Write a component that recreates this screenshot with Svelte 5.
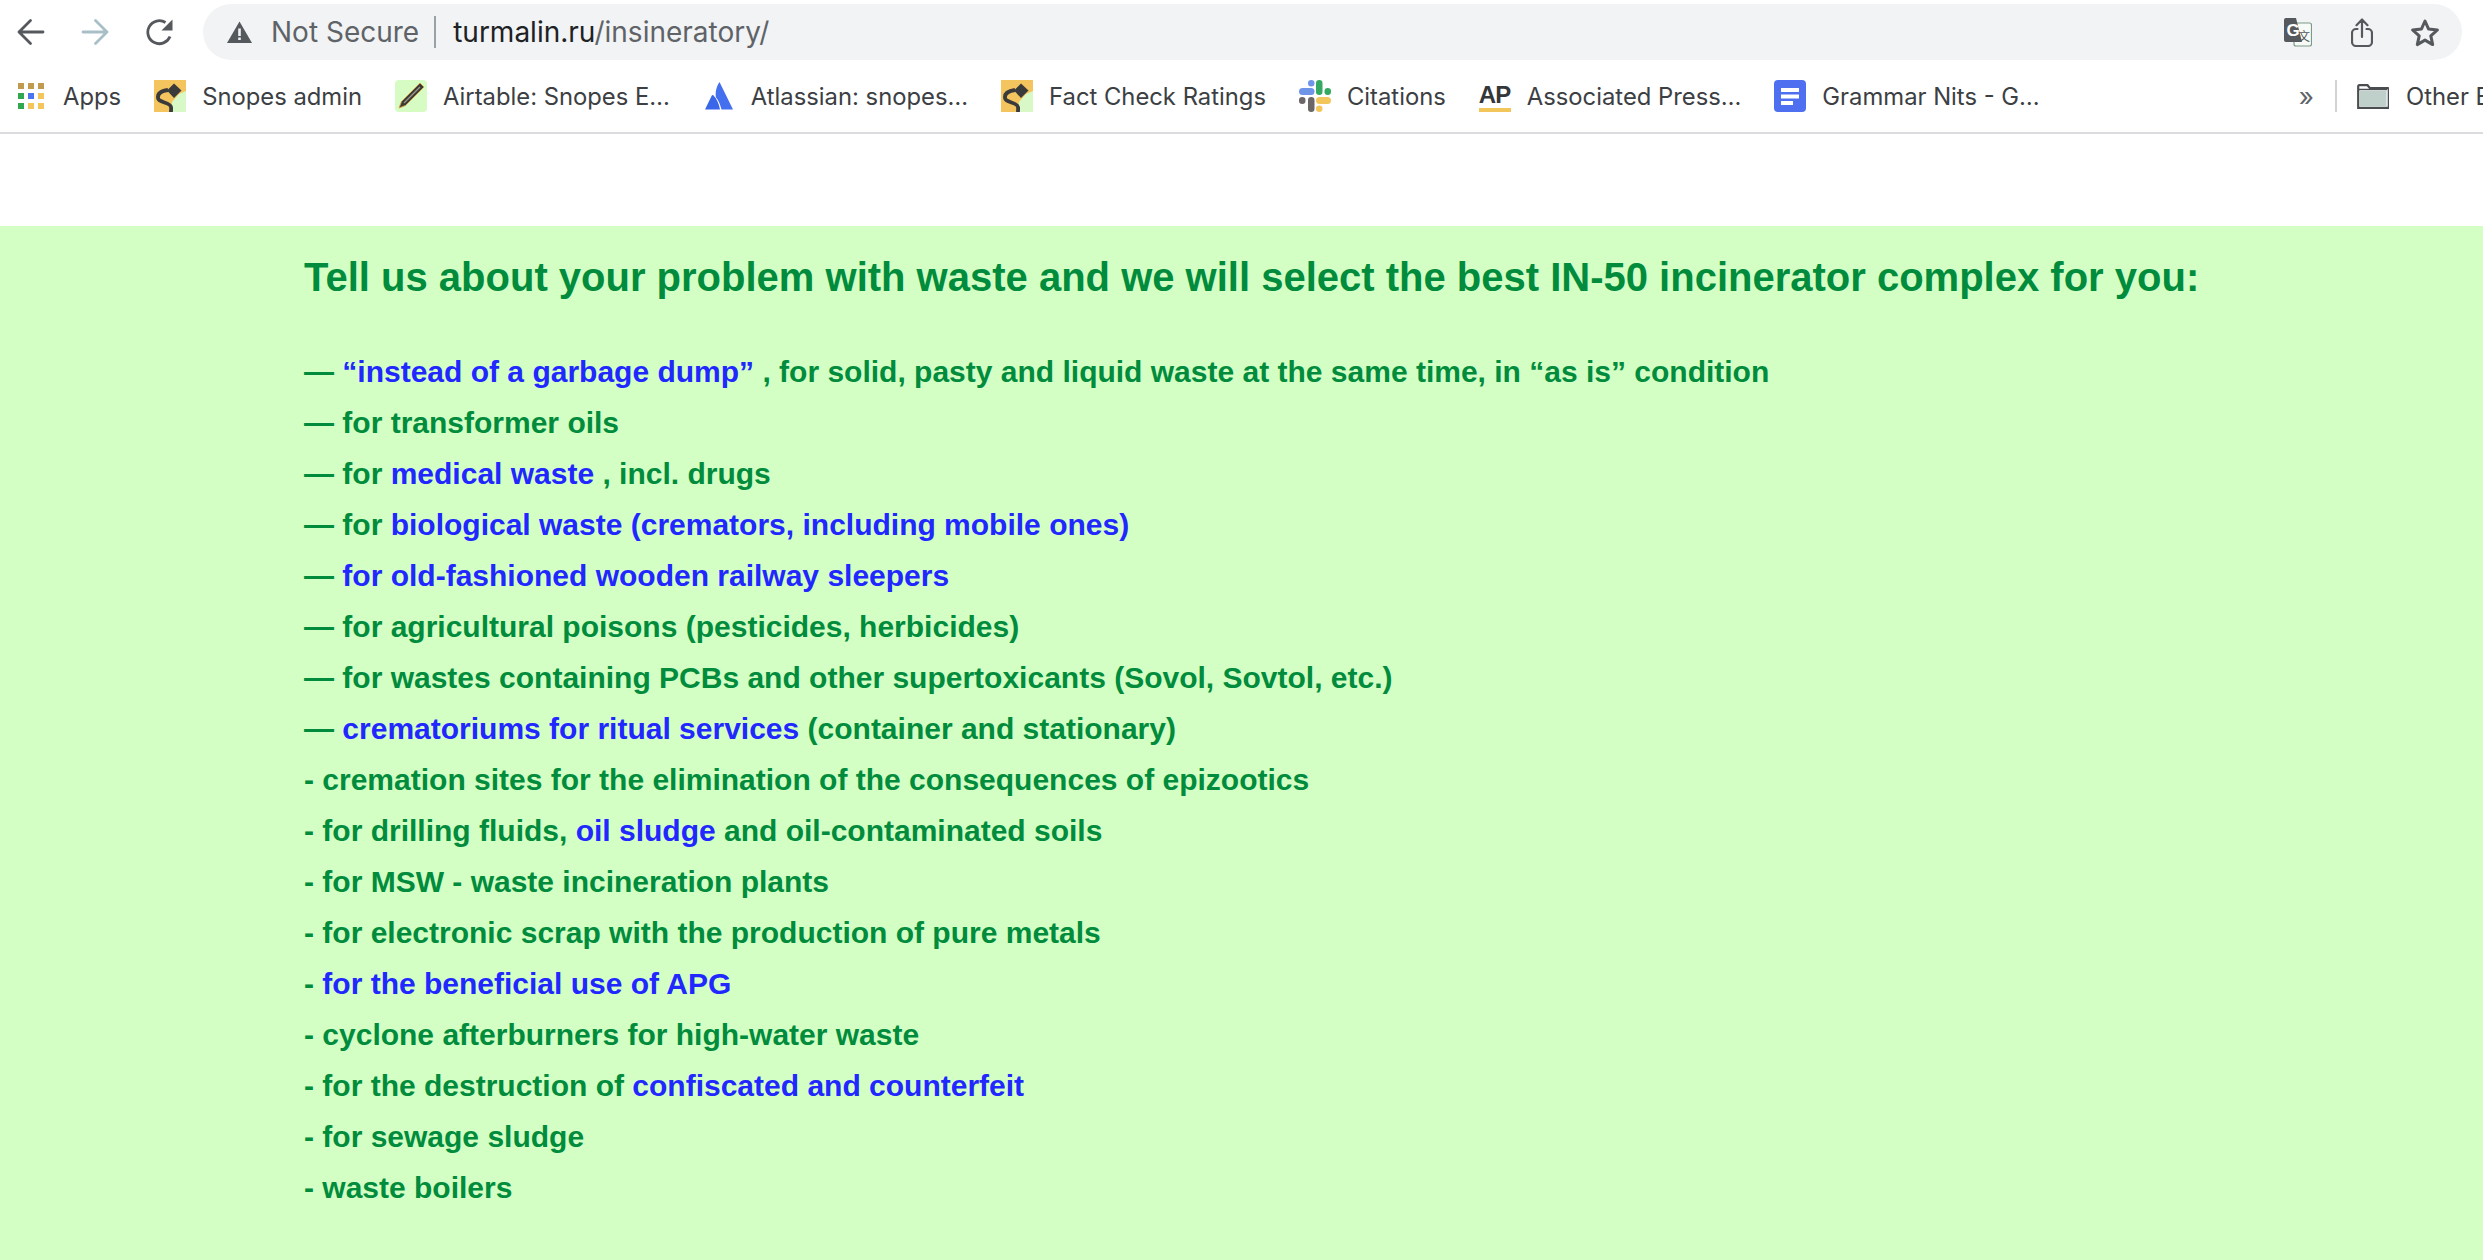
<script>
  const bookmarks = [
    { icon: "snopes", label: "Snopes admin" },
    { icon: "airtable", label: "Airtable: Snopes E…" },
    { icon: "atlassian", label: "Atlassian: snopes…" },
    { icon: "snopes", label: "Fact Check Ratings" },
    { icon: "slack", label: "Citations" },
    { icon: "ap", label: "Associated Press…" },
    { icon: "docs", label: "Grammar Nits - G…" },
  ];

  // each line is a list of runs, link = blue
  const lines = [
    [["— ", 0], ["“instead of a garbage dump”", 1], [" , for solid, pasty and liquid waste at the same time, in “as is” condition", 0]],
    [["— for transformer oils", 0]],
    [["— for ", 0], ["medical waste", 1], [" , incl. drugs", 0]],
    [["— for ", 0], ["biological waste (cremators, including mobile ones)", 1]],
    [["— ", 0], ["for old-fashioned wooden railway sleepers", 1]],
    [["— for agricultural poisons (pesticides, herbicides)", 0]],
    [["— for wastes containing PCBs and other supertoxicants (Sovol, Sovtol, etc.)", 0]],
    [["— ", 0], ["crematoriums for ritual services", 1], [" (container and stationary)", 0]],
    [["- cremation sites for the elimination of the consequences of epizootics", 0]],
    [["- for drilling fluids, ", 0], ["oil sludge", 1], [" and oil-contaminated soils", 0]],
    [["- for MSW - waste incineration plants", 0]],
    [["- for electronic scrap with the production of pure metals", 0]],
    [["- ", 0], ["for the beneficial use of APG", 1]],
    [["- cyclone afterburners for high-water waste", 0]],
    [["- for the destruction of ", 0], ["confiscated and counterfeit", 1]],
    [["- for sewage sludge", 0]],
    [["- waste boilers", 0]],
  ];
</script>

<header class="chrome">
  <div class="toolbar">
    <svg class="nav" viewBox="0 0 28 28" fill="none" stroke="#55585c" stroke-width="2.800" stroke-linecap="round" stroke-linejoin="round">
      <path d="M26 14H2M13.500 2.500 2 14l11.500 11.500" />
    </svg>
    <svg class="nav fwd" viewBox="0 0 28 28" fill="none" stroke="#a9bfc8" stroke-width="2.800" stroke-linecap="round" stroke-linejoin="round">
      <path d="M2 14h24M14.500 2.500 26 14 14.500 25.500" />
    </svg>
    <svg class="nav reload" viewBox="0 0 28 28" fill="none" stroke="#55585c" stroke-width="2.800">
      <path d="M25 18.500A11.500 11.500 0 1 1 20.500 4.500" />
      <path d="M27.500 1.500v11H16.500z" fill="#55585c" stroke="none" />
    </svg>
    <div class="omnibox">
      <svg class="warn" viewBox="0 0 25 22">
        <path d="M12.500 .5 25 22H0z" fill="#55585c" />
        <path d="M11.200 7.500h2.600v7.500h-2.600zM11.200 16.500h2.600v2.600h-2.600z" fill="#f1f3f4" />
      </svg>
      <span class="secure">Not Secure</span>
      <span class="sep"></span>
      <span class="url"><b>turmalin.ru</b>/insineratory/</span>
      <span class="spring"></span>
      <svg class="translate" viewBox="0 0 28 29">
        <rect x="10" y="5" width="17.500" height="23" rx="2" fill="#f7fbf8" stroke="#7d9a88" stroke-width="1.200" />
        <path d="M2 0h10l6 24H2a2 2 0 0 1-2-2V2a2 2 0 0 1 2-2z" fill="#55585c" />
        <text x="2.500" y="18" class="t-g">G</text>
        <text x="14" y="23" class="t-zh">文</text>
      </svg>
      <svg class="share" viewBox="0 0 22 29" fill="none" stroke="#55585c" stroke-width="2.200" stroke-linecap="round" stroke-linejoin="round">
        <path d="M11 19V2M5.500 7.200 11 1.500l5.500 5.700M6.500 11H5a4 4 0 0 0-4 4v9a4 4 0 0 0 4 4h12a4 4 0 0 0 4-4v-9a4 4 0 0 0-4-4h-1.500" />
      </svg>
      <svg class="star" viewBox="0 0 30 29" fill="none" stroke="#55585c" stroke-width="3" stroke-linejoin="round">
        <path d="M15 3l3.600 8.100 8.800.9-6.600 5.900 1.900 8.700-7.700-4.500-7.700 4.500 1.900-8.700L2.600 12l8.800-.9z" />
      </svg>
    </div>
  </div>

  <nav class="bookmarks">
    <div class="mark first">
      <svg class="apps" viewBox="0 0 26 26">
        <rect x="0" y="0" width="6" height="6" fill="#bf9a4f" />
        <rect x="10" y="0" width="6" height="6" fill="#bf9a4f" />
        <rect x="20" y="0" width="6" height="6" fill="#bf9a4f" />
        <rect x="0" y="10" width="6" height="6" fill="#2fa84f" />
        <rect x="10" y="10" width="6" height="6" fill="#4d74f0" />
        <rect x="20" y="10" width="6" height="6" fill="#f3c65c" />
        <rect x="0" y="20" width="6" height="6" fill="#2fa84f" />
        <rect x="10" y="20" width="6" height="6" fill="#f3c65c" />
        <rect x="20" y="20" width="6" height="6" fill="#f3c65c" />
      </svg>
      <span>Apps</span>
    </div>
    {#each bookmarks as b}
      <div class="mark">
        {#if b.icon === "snopes"}
          <svg class="fav" viewBox="0 0 32 32">
            <rect width="32" height="32" fill="#f4c55f" />
            <path d="M32 11 25 14l-7 8-1 10h15z" fill="#d8f8c8" />
            <path d="M20 3.500l7.500 7-7.500 7.500-7-7.500z" fill="#3a3a3a" />
            <path d="M14 10C7 11 3.500 14 4 18c.5 5 12 4 13 9 .3 2 0 3 0 5" fill="none" stroke="#3a3a3a" stroke-width="3.800" />
          </svg>
        {:else if b.icon === "airtable"}
          <svg class="fav" viewBox="0 0 32 32">
            <rect width="32" height="32" rx="4" fill="#d6fcc4" />
            <path d="M24.500 3.500 6.500 21.500 4 28l6.500-2.500L28.500 7.500a2.500 2.500 0 0 0 0-1l-3-3z" fill="#3a3a3a" stroke="#d9a040" stroke-width=".9" stroke-linejoin="round" />
            <path d="M25 7 9 23" stroke="#9a9a85" stroke-width="1.200" />
          </svg>
        {:else if b.icon === "atlassian"}
          <svg class="fav" viewBox="-2 -2 32 32">
            <path d="M14.500 0 28 27.500H16.500C15 22 13.500 18 11 15.500 10 10 11.500 4.500 14.500 0z" fill="#4470f0" />
            <path d="M6.800 13.500c.5-.7 1.200-.7 1.700-.1 3 3 5.500 8 6.500 14.100H0z" fill="#3a66ea" />
          </svg>
        {:else if b.icon === "slack"}
          <svg class="fav" viewBox="0 0 32 32">
            <rect x="9" y="0" width="6.500" height="6.500" rx="3.200" fill="#6f95e8" />
            <rect x="0" y="8" width="15.500" height="7" rx="3.500" fill="#6f95e8" />
            <rect x="17" y="0" width="6.500" height="15" rx="3.200" fill="#35a962" />
            <rect x="25.500" y="8" width="6.500" height="7" rx="3.200" fill="#35a962" />
            <rect x="17" y="17" width="15" height="7" rx="3.500" fill="#f3c65c" />
            <rect x="17" y="25.500" width="6.500" height="6.500" rx="3.200" fill="#f3c65c" />
            <rect x="9" y="17" width="6.500" height="15" rx="3.200" fill="#6b6766" />
            <rect x="0" y="17" width="6.500" height="7" rx="3.200" fill="#6b6766" />
          </svg>
        {:else if b.icon === "ap"}
          <span class="ap">AP</span>
        {:else}
          <svg class="fav" viewBox="0 0 32 32">
            <rect width="32" height="32" rx="4" fill="#4d6ff0" />
            <rect x="7" y="8" width="18" height="4" fill="#fff" />
            <rect x="7" y="14.500" width="18" height="4" fill="#fff" />
            <rect x="7" y="21" width="12" height="4" fill="#fff" />
          </svg>
        {/if}
        <span>{b.label}</span>
      </div>
    {/each}
    <span class="spring"></span>
    <span class="more">»</span>
    <span class="divider"></span>
    <div class="mark other">
      <svg class="folder" viewBox="0 0 32 25">
        <path d="M1.200 23.800V2.200A1 1 0 0 1 2.200 1.200h8.300l2.500 3h17.800a1 1 0 0 1 1 1v18.600z" fill="#fff" stroke="#4b4e50" stroke-width="2.200" />
        <rect x="2.500" y="7" width="27" height="15.500" fill="#bfcfca" />
        <path d="M2 5.500h28" stroke="#4b4e50" stroke-width="1.500" />
      </svg>
      <span>Other Bookmarks</span>
    </div>
  </nav>
</header>

<main>
  <h2>Tell us about your problem with waste and we will select the best IN-50 incinerator complex for you:</h2>
  {#each lines as line}
    <p>
      {#each line as [text, link]}{#if link}<a href="#top">{text}</a>{:else}{text}{/if}{/each}
    </p>
  {/each}
</main>

<style>
  :global(html),
  :global(body) {
    margin: 0;
    height: 1260px;
    overflow: hidden;
    background: #d4ffc4;
  }

  .chrome {
    height: 226px;
    background: #fff;
    overflow: hidden;
    font-family: Inter, "Liberation Sans", sans-serif;
    color: #3c4043;
  }

  .toolbar {
    display: flex;
    align-items: center;
    height: 64px;
    padding-left: 17px;
  }

  .nav {
    width: 28px;
    height: 28px;
    flex: none;
  }

  .fwd {
    margin-left: 36px;
  }

  .reload {
    margin-left: 36px;
  }

  .omnibox {
    display: flex;
    align-items: center;
    flex: none;
    width: 2259px;
    height: 56px;
    margin-left: 30px;
    border-radius: 28px;
    background: #f1f3f4;
    box-sizing: border-box;
    padding: 0 22px 0 24px;
    font-size: 28px;
    color: #5f6368;
  }

  .warn {
    width: 25px;
    height: 22px;
    flex: none;
  }

  .secure {
    margin-left: 19px;
  }

  .sep {
    width: 2px;
    height: 32px;
    margin: 0 17px 0 15px;
    background: #9aa0a6;
  }

  .url b {
    font-weight: 400;
    color: #202124;
  }

  .spring {
    flex: 1;
  }

  .translate {
    width: 28px;
    height: 29px;
  }

  .t-g {
    font: 700 17px "Liberation Sans", sans-serif;
    fill: #fff;
  }

  .t-zh {
    font: 400 12px "Noto Sans CJK SC", sans-serif;
    fill: #55585c;
  }

  .share {
    width: 22px;
    height: 29px;
    margin-left: 39px;
  }

  .star {
    width: 30px;
    height: 29px;
    margin-left: 37px;
  }

  .bookmarks {
    display: flex;
    align-items: center;
    height: 64px;
    padding: 0 0 4px 18px;
    border-bottom: 2px solid #dadce0;
    gap: 33px;
    font-size: 23.8px;
    white-space: nowrap;
  }

  .mark {
    display: flex;
    align-items: center;
    gap: 16px;
  }

  .first {
    gap: 19px;
  }

  .apps {
    width: 26px;
    height: 26px;
  }

  .fav {
    width: 32px;
    height: 32px;
    flex: none;
  }

  .ap {
    width: 32px;
    height: 32px;
    box-sizing: border-box;
    border-bottom: 4px solid #f3c65c;
    font: 700 24px/30px "Liberation Sans", sans-serif;
    letter-spacing: -1px;
    color: #33373a;
  }

  .more {
    margin-right: -12px;
    font-size: 26px;
    color: #5f6368;
  }

  .divider {
    width: 2px;
    height: 32px;
    background: #d0d3d6;
  }

  .other {
    flex: none;
    width: 126px;
    overflow: hidden;
    margin-left: -13px;
    gap: 17px;
  }

  .folder {
    width: 32px;
    height: 25px;
    flex: none;
  }

  main {
    box-sizing: border-box;
    height: 1034px;
    padding: 24px 0 0 304px;
    background: #d4ffc4;
    font-family: "Liberation Sans", Arial, sans-serif;
    font-weight: 700;
    color: #008c3c;
  }

  h2 {
    margin: 0 0 42px;
    font-size: 40px;
    line-height: 54px;
    font-weight: 700;
  }

  p {
    margin: 0;
    font-size: 30px;
    line-height: 51px;
  }

  a {
    color: #2128ff;
    text-decoration: none;
  }
</style>
